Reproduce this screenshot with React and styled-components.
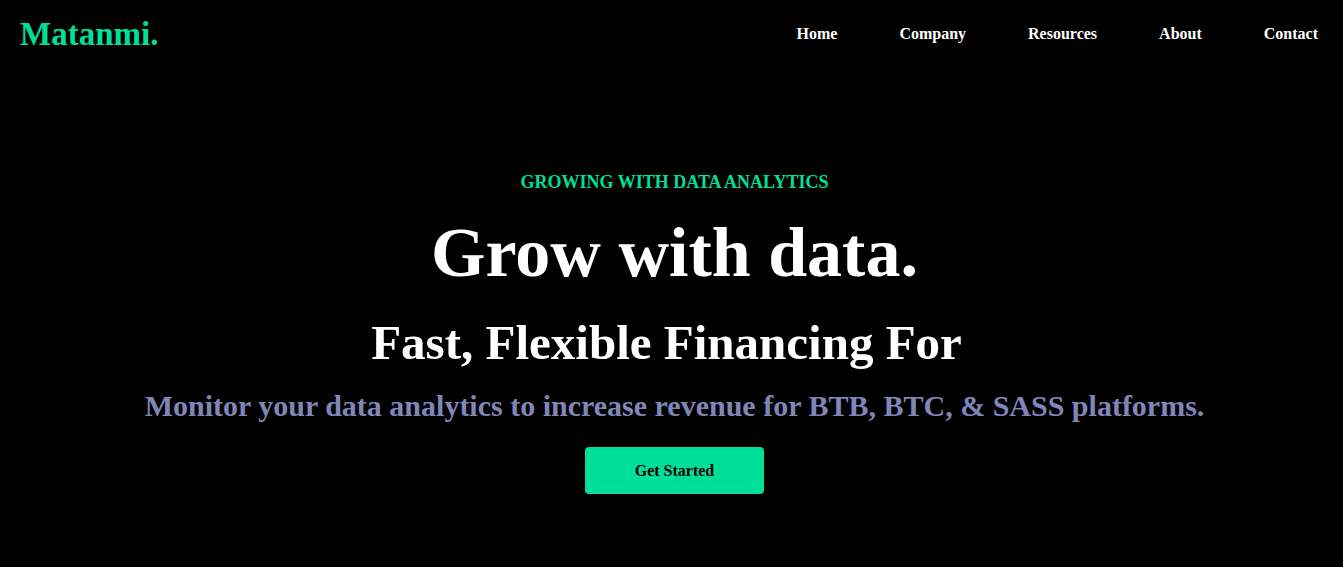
import React from 'react';
import styled, { createGlobalStyle } from 'styled-components';

const GlobalStyle = createGlobalStyle`
  html, body {
    margin: 0;
    padding: 0;
    background: #000000;
  }
  body {
    font-family: "Liberation Serif", "Times New Roman", serif;
    color: #ffffff;
  }
`;

const Nav = styled.nav`
  display: flex;
  justify-content: space-between;
  align-items: center;
  height: 68px;
  padding: 0 25px 0 20px;
`;

const Logo = styled.h1`
  margin: 0;
  font-size: 33px;
  font-weight: bold;
  color: #00df9a;
`;

const Menu = styled.ul`
  display: flex;
  gap: 62px;
  list-style: none;
  margin: 0;
  padding: 0;
`;

const MenuItem = styled.li`
  font-size: 16px;
  font-weight: bold;
  color: #ffffff;
`;

const Hero = styled.section`
  display: flex;
  flex-direction: column;
  align-items: center;
  text-align: center;
  padding: 104px 0 0 6px;
`;

const Tagline = styled.p`
  margin: 0;
  font-size: 18px;
  font-weight: bold;
  color: #00df9a;
  line-height: 20px;
`;

const Title = styled.h1`
  margin: 18px 0 0;
  font-size: 70px;
  font-weight: bold;
  line-height: 86px;
`;

const Subtitle = styled.h2`
  display: flex;
  align-items: center;
  margin: 16px 0 0;
  font-size: 49px;
  font-weight: bold;
  line-height: 62px;
`;

const Typed = styled.span`
  display: inline-block;
  width: 16px;
`;

const Lead = styled.p`
  margin: 12px 0 0;
  font-size: 30px;
  font-weight: bold;
  color: #8086b8;
  line-height: 40px;
`;

const Button = styled.button`
  margin-top: 21px;
  width: 179px;
  height: 47px;
  border: none;
  border-radius: 4px;
  background: #00df9a;
  color: #000000;
  font-family: "Liberation Serif", "Times New Roman", serif;
  font-size: 16px;
  font-weight: bold;
  cursor: pointer;
`;

const links = ['Home', 'Company', 'Resources', 'About', 'Contact'];

export default function App() {
  return (
    <>
      <GlobalStyle />
      <Nav>
        <Logo>Matanmi.</Logo>
        <Menu>
          {links.map((l) => (
            <MenuItem key={l}>{l}</MenuItem>
          ))}
        </Menu>
      </Nav>
      <Hero>
        <Tagline>GROWING WITH DATA ANALYTICS</Tagline>
        <Title>Grow with data.</Title>
        <Subtitle>
          Fast, Flexible Financing For
          <Typed />
        </Subtitle>
        <Lead>Monitor your data analytics to increase revenue for BTB, BTC, &amp; SASS platforms.</Lead>
        <Button>Get Started</Button>
      </Hero>
    </>
  );
}
